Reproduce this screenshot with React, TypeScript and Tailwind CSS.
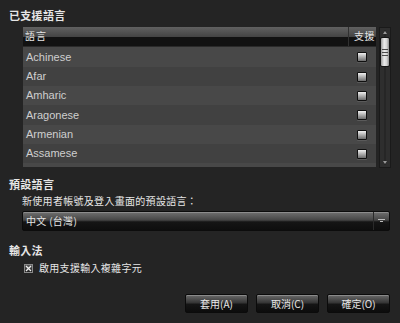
import React from 'react';

const langs = ['Achinese', 'Afar', 'Amharic', 'Aragonese', 'Armenian', 'Assamese'];
const rowH = [20, 19, 19, 20, 19, 19];

const cjk = { fontFamily: '"Noto Sans CJK TC", "Liberation Sans", sans-serif' };
const latin = { fontFamily: '"Liberation Sans", "Noto Sans CJK TC", sans-serif' };

function Box() {
  return (
    <div className="w-[10px] h-[10px] border border-[#101010] rounded-[1px] bg-[linear-gradient(#f0f0f0,#b4b4b4_45%,#6c6c6c)] shadow-[0_1px_0_#5a5a5a]" />
  );
}

function Button({ label }: { label: string }) {
  return (
    <button
      className="w-[63px] h-[19px] flex items-center justify-center border border-[#0b0b0b] rounded-[2px] bg-[linear-gradient(#6a6a6a,#363636_45%,#151515_55%,#0c0c0c)] shadow-[inset_0_1px_0_#8a8a8a] text-[10px] leading-none text-[#e8e8e8]"
      style={cjk}
    >
      {label}
    </button>
  );
}

export default function App() {
  return (
    <div className="w-[400px] h-[323px] bg-[#242424] overflow-hidden text-[#e6e6e6]">
      <div className="pl-[9px] pt-[9px] text-[11px] leading-[12px] font-bold tracking-[0.3px]" style={cjk}>
        已支援語言
      </div>

      {/* language table + scrollbar */}
      <div className="mt-[6px] ml-[23px] flex gap-[3px] h-[141px]">
        <div className="w-[353px] h-[140px] overflow-hidden flex flex-col bg-[#484848]">
          <div className="h-[20px] shrink-0 flex bg-[linear-gradient(#616161,#454545_50%,#121212_50%,#121212)] border-b border-[#2a2a2a]">
            <div className="flex-1 pl-[2px] pt-[3px] text-[10px] leading-[12px] tracking-[1px]" style={cjk}>
              語言
            </div>
            <div className="w-[28px] border-l border-[#303030] pl-[5px] pt-[3px] text-[10px] leading-[12px] tracking-[0.5px]" style={cjk}>
              支援
            </div>
          </div>
          {langs.map((l, i) => (
            <div
              key={l}
              className={`shrink-0 flex items-center ${i % 2 === 0 ? 'bg-[#484848]' : 'bg-[#414141]'}`}
              style={{ height: rowH[i] }}
            >
              <div className="flex-1 pl-[3px] text-[11px] text-[#cfcfcf]" style={latin}>
                {l}
              </div>
              <div className="w-[19px]">
                <Box />
              </div>
            </div>
          ))}
        </div>

        {/* scrollbar */}
        <div className="w-[12px] h-[141px] border border-[#1a1a1a] bg-[#2e2e2e] flex flex-col items-center relative">
          <div className="absolute left-[4px] top-[2px] bottom-[2px] w-[2px] bg-[#262626]" />
          <svg width="6" height="5" viewBox="0 0 6 5" className="mt-[2px] relative">
            <path d="M3 1 L5 4 L1 4 Z" fill="#9a9a9a" />
          </svg>
          <div className="relative mt-[2px] w-[10px] h-[30px] rounded-[2px] border border-[#151515] bg-[linear-gradient(90deg,#9c9c9c,#ebebeb_40%,#d6d6d6_70%,#8e8e8e)] flex flex-col items-center justify-center gap-[2px]">
            <div className="w-[6px] h-[1px] bg-[#4a4a4a]" />
            <div className="w-[6px] h-[1px] bg-[#4a4a4a]" />
            <div className="w-[6px] h-[1px] bg-[#4a4a4a]" />
          </div>
          <div className="flex-1" />
          <svg width="6" height="5" viewBox="0 0 6 5" className="mb-[2px] relative">
            <path d="M1 1 L5 1 L3 4 Z" fill="#9a9a9a" />
          </svg>
        </div>
      </div>

      <div className="mt-[10px] pl-[9px] text-[11px] leading-[12px] font-bold tracking-[0.3px]" style={cjk}>
        預設語言
      </div>
      <div className="mt-[5px] pl-[22px] text-[10px] leading-[12px] tracking-[0.3px]" style={cjk}>
        新使用者帳號及登入畫面的預設語言：
      </div>

      {/* dropdown */}
      <div className="mt-[4px] ml-[22px] w-[368px] h-[20px] flex border border-[#0c0c0c] rounded-[2px] bg-[linear-gradient(#707070,#454545_45%,#151515_55%,#0e0e0e)] shadow-[inset_0_1px_0_#8c8c8c]">
        <div className="flex-1 pl-[3px] pt-[3px] text-[10px] leading-[12px] tracking-[0.3px]" style={cjk}>
          中文 (台灣)
        </div>
        <div className="w-[16px] border-l border-[#2a2a2a] flex items-center justify-center">
          <svg width="7" height="4" viewBox="0 0 7 4">
            <path d="M0 0.5 H7 M2 2.5 H5" stroke="#bdbdbd" strokeWidth="1" />
          </svg>
        </div>
      </div>

      <div className="mt-[13px] pl-[9px] text-[11px] leading-[12px] font-bold tracking-[0.3px]" style={cjk}>
        輸入法
      </div>
      <div className="mt-[6px] pl-[24px] flex items-center gap-[6px]">
        <div className="w-[9px] h-[9px] border border-[#8a8a8a] bg-[linear-gradient(#5a5a5a,#202020)] flex items-center justify-center">
          <svg width="7" height="7" viewBox="0 0 7 7">
            <path d="M1 1 L6 6 M6 1 L1 6" stroke="#f0f0f0" strokeWidth="1.3" />
          </svg>
        </div>
        <div className="text-[10px] leading-[12px] tracking-[0.3px]" style={cjk}>
          啟用支援輸入複雜字元
        </div>
      </div>

      <div className="mt-[20px] pr-[10px] flex justify-end gap-[8px]">
        <Button label="套用(A)" />
        <Button label="取消(C)" />
        <Button label="確定(O)" />
      </div>
    </div>
  );
}
